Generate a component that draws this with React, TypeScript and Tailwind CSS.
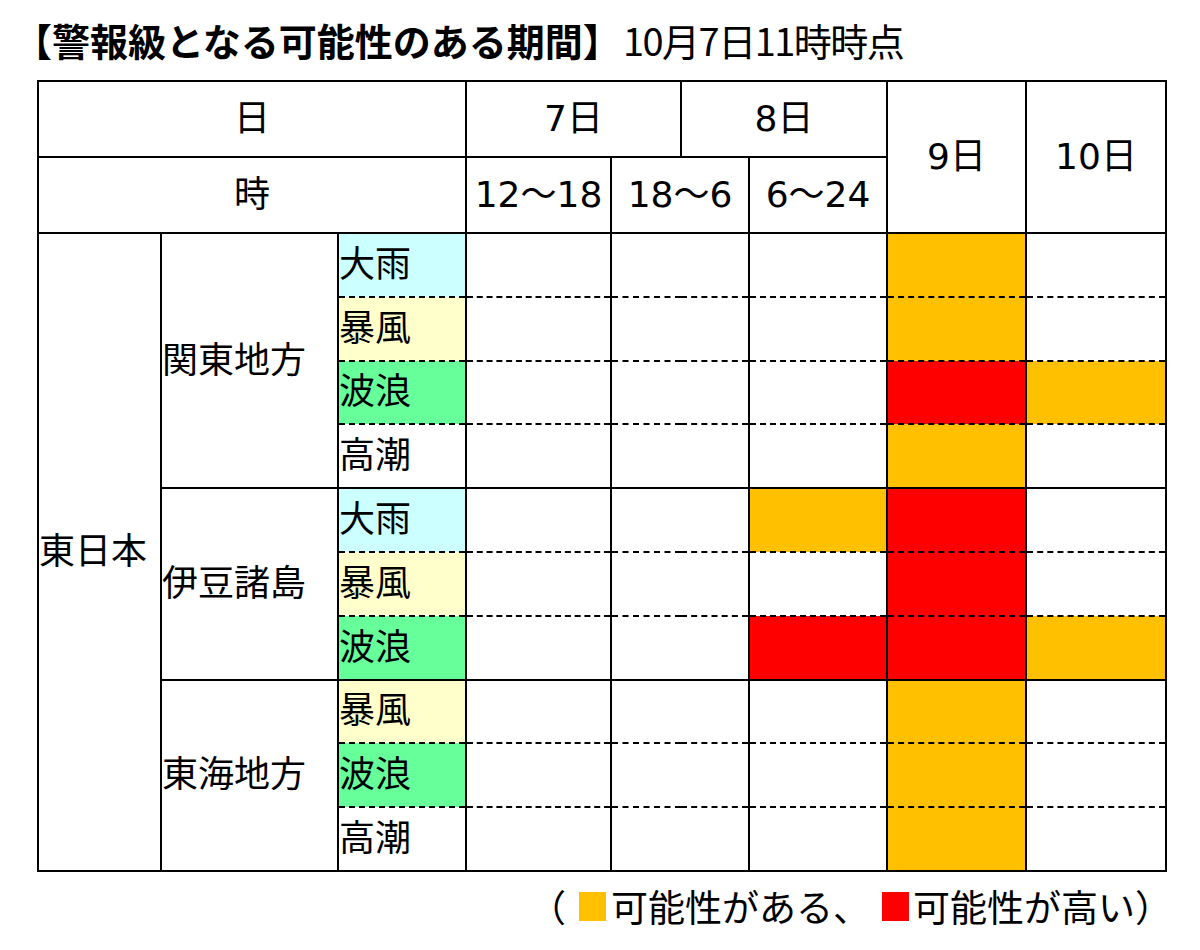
const ORANGE = 'bg-[#ffc000]';
const RED = 'bg-[#ff0000]';

type Level = 0 | 1 | 2;

const hazardBg: Record<string, string> = {
  大雨: 'bg-[#ccffff]',
  暴風: 'bg-[#ffffcc]',
  波浪: 'bg-[#66ff99]',
  高潮: 'bg-white',
};

const groups: { region: string; items: [string, Level[]][] }[] = [
  {
    region: '関東地方',
    items: [
      ['大雨', [0, 0, 0, 1, 0]],
      ['暴風', [0, 0, 0, 1, 0]],
      ['波浪', [0, 0, 0, 2, 1]],
      ['高潮', [0, 0, 0, 1, 0]],
    ],
  },
  {
    region: '伊豆諸島',
    items: [
      ['大雨', [0, 0, 1, 2, 0]],
      ['暴風', [0, 0, 0, 2, 0]],
      ['波浪', [0, 0, 2, 2, 1]],
    ],
  },
  {
    region: '東海地方',
    items: [
      ['暴風', [0, 0, 0, 1, 0]],
      ['波浪', [0, 0, 0, 1, 0]],
      ['高潮', [0, 0, 0, 1, 0]],
    ],
  },
];

function levelBg(l: Level) {
  if (l === 2) return RED;
  if (l === 1) return ORANGE;
  return 'bg-white';
}

export default function App() {
  const cell = 'border-2 border-black p-0';

  return (
    <div className="w-[1200px] h-[950px] bg-white text-black font-['DejaVu_Sans','Noto_Sans_CJK_JP',sans-serif]">
      {/* Title */}
      <div className="flex items-baseline pt-[16px] pl-[14px] h-[66px] font-['Noto_Sans_CJK_JP',sans-serif]">
        <span className="text-[38px] leading-[48px] font-bold">【警報級となる可能性のある期間】</span>
        <span className="text-[38px] leading-[48px] tracking-[-1.5px] ml-[2px]">10月7日11時時点</span>
      </div>

      <table className="mt-[14px] ml-[37px] w-[1128px] table-fixed border-collapse text-[36px] leading-none">
        <colgroup>
          <col className="w-[123px]" />
          <col className="w-[177px]" />
          <col className="w-[128px]" />
          <col className="w-[145px]" />
          <col className="w-[70px]" />
          <col className="w-[68px]" />
          <col className="w-[138px]" />
          <col className="w-[139px]" />
          <col className="w-[140px]" />
        </colgroup>
        <thead>
          <tr className="h-[76px]">
            <th colSpan={3} className={`${cell} font-normal text-center`}>日</th>
            <th colSpan={2} className={`${cell} font-normal text-center`}>7日</th>
            <th colSpan={2} className={`${cell} font-normal text-center`}>8日</th>
            <th rowSpan={2} className={`${cell} font-normal text-center`}>9日</th>
            <th rowSpan={2} className={`${cell} font-normal text-center`}>10日</th>
          </tr>
          <tr className="h-[76px]">
            <th colSpan={3} className={`${cell} font-normal text-center`}>時</th>
            <th className={`${cell} font-normal text-center`}>12～18</th>
            <th colSpan={2} className={`${cell} font-normal text-center`}>18～6</th>
            <th className={`${cell} font-normal text-center`}>6～24</th>
          </tr>
        </thead>
        <tbody>
          {groups.map((g, gi) =>
            g.items.map(([hazard, levels], i) => {
              const first = i === 0;
              const last = i === g.items.length - 1;
              const dash = `${first ? '' : '[border-top-style:dashed]'} ${last ? '' : '[border-bottom-style:dashed]'}`;
              return (
                <tr key={`${gi}-${i}`} className="h-[63.8px]">
                  {gi === 0 && i === 0 && (
                    <td rowSpan={10} className={`${cell} text-left align-middle`}>東日本</td>
                  )}
                  {first && (
                    <td rowSpan={g.items.length} className={`${cell} text-left align-middle`}>
                      {g.region}
                    </td>
                  )}
                  <td className={`${cell} ${dash} ${hazardBg[hazard]} text-left align-middle`}>{hazard}</td>
                  {levels.map((l, k) => (
                    <td key={k} colSpan={k === 1 ? 2 : 1} className={`${cell} ${dash} ${levelBg(l)}`} />
                  ))}
                </tr>
              );
            })
          )}
        </tbody>
      </table>

      {/* Legend */}
      <div className="flex justify-end items-center w-[1172px] mt-[16px] text-[37px] leading-none font-['Noto_Sans_CJK_JP',sans-serif]">
        <span className="mr-[13px]">（</span>
        <span className={`inline-block w-[27px] h-[29px] ${ORANGE} mr-[5px]`} />
        <span className="mr-[12px]">可能性がある、</span>
        <span className={`inline-block w-[27px] h-[29px] ${RED} mr-[4px]`} />
        <span>可能性が高い）</span>
      </div>
    </div>
  );
}
